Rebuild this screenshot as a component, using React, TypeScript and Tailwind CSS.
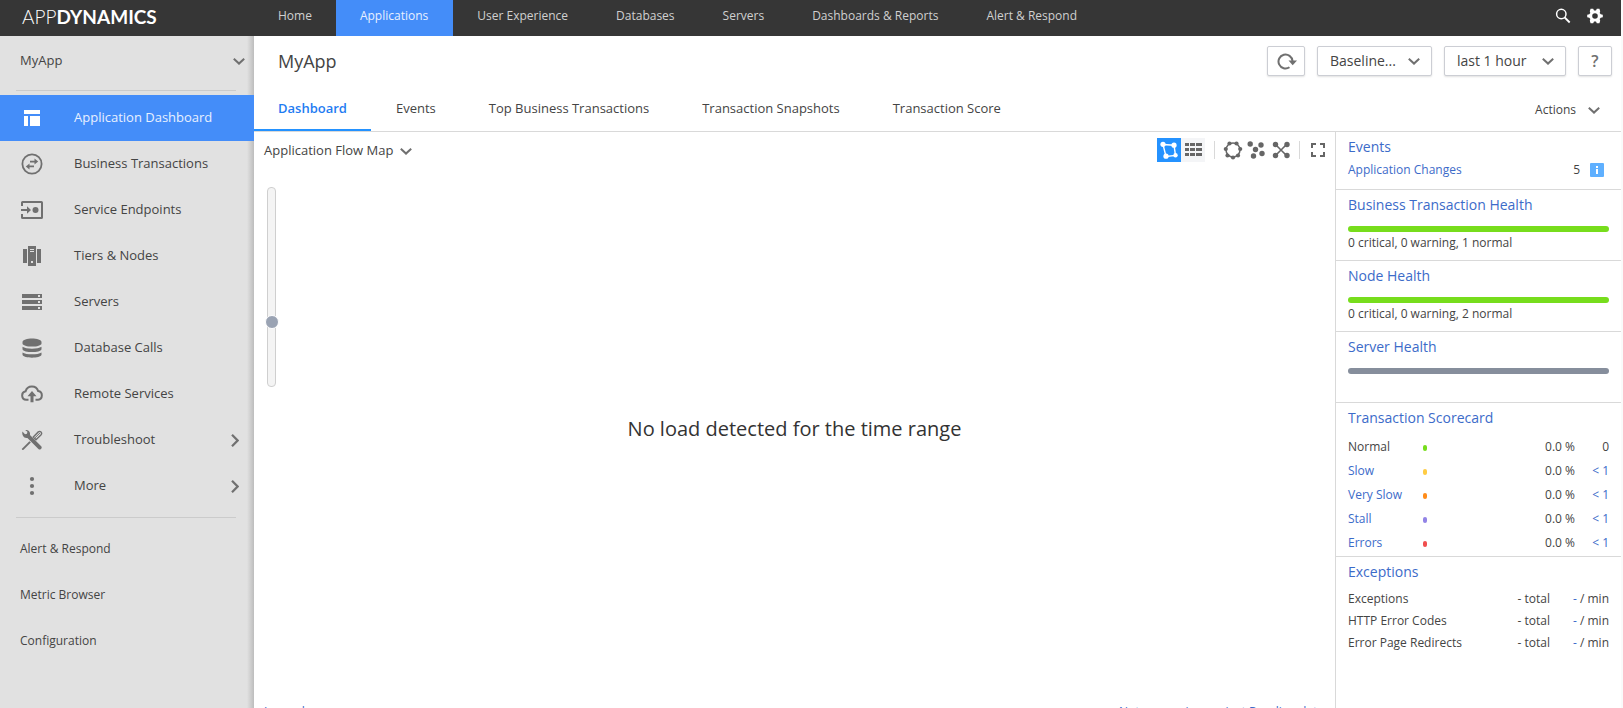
import React from "react";

type IconProps = { className?: string };

const Chevron = ({ className = "" }: IconProps) => (
  <svg viewBox="0 0 12 7" className={`h-[7px] w-3 shrink-0 ${className}`} fill="none" stroke="#707070" strokeWidth="2">
    <path d="M0.8 0.8 6 5.6 11.2 0.8" />
  </svg>
);

const ChevronRight = () => (
  <svg viewBox="0 0 8 13" className="h-[13px] w-2 shrink-0" fill="none" stroke="#707070" strokeWidth="2.2">
    <path d="M1 0.8 6.6 6.5 1 12.2" />
  </svg>
);

const Glyph = ({ children }: { children: React.ReactNode }) => (
  <svg viewBox="0 0 22 22" className="size-[22px] shrink-0" fill="currentColor">
    {children}
  </svg>
);

const DashboardIcon = () => (
  <Glyph>
    <path d="M3 3h16v4H3zM3 9h4v10H3zM9 9h10v10H9z" />
  </Glyph>
);

const TransactionsIcon = () => (
  <Glyph>
    <circle cx="11" cy="11" r="9.6" fill="none" stroke="currentColor" strokeWidth="1.8" />
    <path d="M9 7.8h4.5V5.6L17.2 8.6 13.5 11.6V9.4H9zM13 12.6H8.500V10.400L4.800 13.400 8.500 16.400V14.200H13z" />
  </Glyph>
);

const EndpointsIcon = () => (
  <Glyph>
    <path d="M1 7V3.600Q1 3 1.600 3H20.400Q21 3 21 3.600V18.400Q21 19 20.400 19H1.600Q1 19 1 18.400V15" fill="none" stroke="currentColor" strokeWidth="2" />
    <path d="M0 10h6V7.200L10 11 6 14.800V12H0z" />
    <circle cx="14.500" cy="11" r="3" />
  </Glyph>
);

const TiersIcon = () => (
  <Glyph>
    <path d="M2 4h4v14H2zM16 4h4v14h-4z" />
    <path fillRule="evenodd" d="M7 1h8v20H7zM9 4v1h4V4zM9 6v1h4V6zM10 16v2h2v-2z" />
  </Glyph>
);

const ServersIcon = () => (
  <Glyph>
    <path
      fillRule="evenodd"
      d="M1 3h20v4H1zM17 4v2h2V4zM1 9h20v4H1zM17 10v2h2v-2zM1 15h20v4H1zM17 16v2h2v-2z"
    />
  </Glyph>
);

const DatabaseIcon = () => (
  <Glyph>
    <path d="M1.500 5C1.500 0.200 20.500 0.200 20.500 5V6.500C20.500 10.600 1.500 10.600 1.500 6.500z" />
    <path d="M1.500 9.800C5 12.400 17 12.400 20.500 9.800V12.200C19.500 16 2.500 16 1.500 12.200z" />
    <path d="M1.500 15.400C5 18 17 18 20.500 15.400V17.800C19.500 21.600 2.500 21.600 1.500 17.800z" />
  </Glyph>
);

const CloudIcon = () => (
  <Glyph>
    <path
      d="M7.500 16.800H5.200A4.300 4.300 0 0 1 4.600 8.300 6.600 6.600 0 0 1 17.200 8.100 4.400 4.400 0 0 1 17 16.800H14.500"
      fill="none"
      stroke="currentColor"
      strokeWidth="2"
    />
    <path d="M9.500 19.200v-6H6.500L11 8l4.500 5.200h-3v6z" />
  </Glyph>
);

const ToolsIcon = () => (
  <Glyph>
    <path d="M1.400 2.600 4 5.200 6 4.700 6.400 2.800 4.200 1C7.200 0.400 9.600 2.700 9 6L20.200 17.200C21.800 19 19.200 21.600 17.400 20L6.400 8.900C3.200 9.700 0.600 6.600 1.400 2.600z" />
    <path d="M1.200 19.400 8.400 12.200 9.800 13.600 2.600 20.800 0.900 21.100z" />
    <path
      d="M12.300 7.900 17.300 2.900Q18.800 1.800 20 3 21.200 4.200 20.100 5.700L15 10.700z"
      fill="none"
      stroke="currentColor"
      strokeWidth="1.400"
    />
    <path d="M14 8.800 19 3.900" stroke="currentColor" strokeWidth="1" />
  </Glyph>
);

const MoreIcon = () => (
  <Glyph>
    <circle cx="11" cy="4" r="2.100" />
    <circle cx="11" cy="11" r="2.100" />
    <circle cx="11" cy="18" r="2.100" />
  </Glyph>
);

const navItems = ["Home", "Applications", "User Experience", "Databases", "Servers", "Dashboards & Reports", "Alert & Respond"];

const sideItems = [
  { label: "Application Dashboard", icon: <DashboardIcon />, active: true },
  { label: "Business Transactions", icon: <TransactionsIcon /> },
  { label: "Service Endpoints", icon: <EndpointsIcon /> },
  { label: "Tiers & Nodes", icon: <TiersIcon /> },
  { label: "Servers", icon: <ServersIcon /> },
  { label: "Database Calls", icon: <DatabaseIcon /> },
  { label: "Remote Services", icon: <CloudIcon /> },
  { label: "Troubleshoot", icon: <ToolsIcon />, nested: true },
  { label: "More", icon: <MoreIcon />, nested: true },
];

const tabs = ["Events", "Top Business Transactions", "Transaction Snapshots", "Transaction Score"];

const health = [
  { title: "Business Transaction Health", bar: "bg-[#77dd1c]", text: "0 critical, 0 warning, 1 normal" },
  { title: "Node Health", bar: "bg-[#77dd1c]", text: "0 critical, 0 warning, 2 normal" },
  { title: "Server Health", bar: "bg-[#868e9c]", text: "" },
];

const scorecard = [
  { label: "Normal", dot: "bg-[#77dd1c]", count: "0" },
  { label: "Slow", dot: "bg-[#ffcc44]", count: "< 1", link: true },
  { label: "Very Slow", dot: "bg-[#ff8c1a]", count: "< 1", link: true },
  { label: "Stall", dot: "bg-[#9283e6]", count: "< 1", link: true },
  { label: "Errors", dot: "bg-[#f04e4e]", count: "< 1", link: true },
];

const exceptions = ["Exceptions", "HTTP Error Codes", "Error Page Redirects"];

const boxed = "h-[30px] rounded-[2px] border border-[#ccced4] bg-white shadow-[0_1px_2px_rgba(0,0,0,0.12)]";

function TopBar() {
  return (
    <header className="flex h-9 shrink-0 items-stretch bg-[#363636]">
      <div className="flex w-[254px] shrink-0 items-center pb-[3px] pl-[22px] font-[Lato,sans-serif] text-[19px] leading-8 text-white">
        <span className="font-light">APP</span>
        <span className="font-bold">DYNAMICS</span>
      </div>
      <nav className="flex text-xs text-[#d0d0d0]">
        {navItems.map((item) => (
          <a
            key={item}
            href="#"
            className={`flex items-center whitespace-nowrap pb-[5px] pl-6 ${item === "Applications" ? "bg-[#448df9] pr-[25px] text-[#e8f0ff]" : "pr-6"}`}
          >
            {item}
          </a>
        ))}
      </nav>
      <div className="ml-auto flex items-center gap-4 pb-1 pr-[18px] text-white">
        <button aria-label="Search">
          <svg viewBox="0 0 16 16" className="size-4" fill="none" stroke="currentColor">
            <circle cx="6.300" cy="6" r="4.700" strokeWidth="1.500" />
            <path d="M9.700 9.500 14.700 14.500" strokeWidth="1.800" />
          </svg>
        </button>
        <button aria-label="Settings">
          <svg viewBox="0 0 16 16" className="size-4" fill="currentColor">
            <path
              fillRule="evenodd"
              d="M3.600 0.800H6.200L7 2.400H9L9.800 0.800H12.400L13.200 3.200 12.700 4.900 13.700 6.200 15.800 6.700V9.300L13.700 9.800 12.700 11.100 13.200 12.800 12.400 15.200H9.800L9 13.600H7L6.200 15.200H3.600L2.800 12.800 3.300 11.100 2.300 9.800 0.200 9.300V6.700L2.300 6.200 3.300 4.900 2.800 3.200zM8 5.200A2.800 2.800 0 1 0 8 10.800 2.800 2.800 0 1 0 8 5.200z"
            />
          </svg>
        </button>
      </div>
    </header>
  );
}

function Sidebar() {
  return (
    <aside className="w-[254px] shrink-0 bg-[#e1e1e1] bg-[linear-gradient(to_left,#bdbdbd,#e1e1e1_7px)] text-[13px] text-[#444]">
      <button className="flex h-[50px] w-full items-center justify-between pl-5 pr-[9px]">
        MyApp
        <Chevron />
      </button>
      <hr className="mb-1 ml-4 mr-[18px] mt-1 border-[#cbcbcb]" />
      <nav>
        {sideItems.map((item) => (
          <a
            key={item.label}
            href="#"
            className={`flex h-[46px] items-center gap-[31px] pl-[21px] pr-[15px] ${item.active ? "bg-[#448df9] text-white" : "text-[#707070]"}`}
          >
            {item.icon}
            <span className={`grow ${item.active ? "text-[#e8f0ff]" : "text-[#444]"}`}>{item.label}</span>
            {item.nested && <ChevronRight />}
          </a>
        ))}
      </nav>
      <hr className="mb-2 ml-4 mr-[18px] mt-2 border-[#cbcbcb]" />
      <nav className="text-xs">
        {["Alert & Respond", "Metric Browser", "Configuration"].map((item) => (
          <a key={item} href="#" className="flex h-[46px] items-center pl-5">
            {item}
          </a>
        ))}
      </nav>
    </aside>
  );
}

function Picker({ label, value, width }: { label: string; value: string; width: string }) {
  return (
    <div className={`relative ${width}`}>
      <select
        aria-label={label}
        className={`${boxed} w-full appearance-none pl-3 text-sm leading-5 text-[#444]`}
      >
        <option>{value}</option>
      </select>
      <Chevron className="pointer-events-none absolute right-3 top-3" />
    </div>
  );
}

function PageHead() {
  return (
    <>
      <div className="flex h-[50px] shrink-0 items-center justify-between pl-6 pr-[9px]">
        <h1 className="text-lg text-[#444]">MyApp</h1>
        <div className="flex gap-3">
          <button aria-label="Refresh" className={`${boxed} flex w-[38px] items-center justify-center pl-[2px]`}>
            <svg viewBox="0 0 20 18" className="h-[18px] w-5" fill="none">
              <path d="M12.500 15.300A7 7 0 1 1 15.500 9" stroke="#707070" strokeWidth="2" />
              <path d="M11.500 8.600H20L15.700 13.200z" fill="#707070" />
            </svg>
          </button>
          <Picker label="Baseline" value="Baseline..." width="w-[115px]" />
          <Picker label="Time range" value="last 1 hour" width="w-[122px]" />
          <button aria-label="Help" className={`${boxed} w-[34px] text-base leading-5 font-semibold text-[#707070]`}>
            ?
          </button>
        </div>
      </div>
      <div className="flex h-[46px] shrink-0 items-stretch border-b border-[#d9d9d9] text-[13px] text-[#444]">
        <a href="#" className="flex items-center border-b-2 border-[#2492ff] px-6 pt-[3px] font-semibold text-[#1f7cf2]">
          Dashboard
        </a>
        {tabs.map((tab) => (
          <a key={tab} href="#" className="flex items-center border-b-2 border-transparent pl-[25px] pr-7 pt-[3px]">
            {tab}
          </a>
        ))}
        <button className="ml-auto flex items-center gap-3 pr-[21px] pt-[3px] text-xs">
          Actions
          <Chevron />
        </button>
      </div>
    </>
  );
}

function MapTools() {
  return (
    <div className="flex items-center text-[#666]">
      <button aria-label="Flow map view" className="bg-[#2492ff] text-white">
        <svg viewBox="0 0 24 24" className="size-6" fill="currentColor">
          <path d="M6 6.500 17 7.200 18.500 17.500 9 18.500z" fill="none" stroke="currentColor" strokeWidth="1.400" />
          <circle cx="6" cy="6.300" r="2.600" />
          <circle cx="17" cy="7.200" r="2.600" />
          <circle cx="18.500" cy="17.300" r="2.200" />
          <circle cx="9" cy="18.200" r="2.600" />
        </svg>
      </button>
      <button aria-label="List view" className="bg-[#f4f5f7]">
        <svg viewBox="0 0 24 24" className="size-6" fill="currentColor">
          <path d="M4 5h4v3H4zM9 5h5v3H9zM15 5h6v3h-6zM4 10h4v3H4zM9 10h5v3H9zM15 10h6v3h-6zM4 15h4v3H4zM9 15h5v3H9zM15 15h6v3h-6z" />
        </svg>
      </button>
      <span className="ml-[9px] h-[18px] w-px bg-[#d9d9d9]" />
      <button aria-label="Circular layout" className="ml-2">
        <svg viewBox="0 0 20 20" className="size-5" fill="currentColor">
          <circle cx="10" cy="10" r="7" fill="none" stroke="currentColor" strokeWidth="1.500" />
          <circle cx="6.500" cy="3.500" r="2.100" />
          <circle cx="13.500" cy="3.500" r="2.100" />
          <circle cx="17.200" cy="9" r="2.100" />
          <circle cx="15" cy="15.500" r="2.100" />
          <circle cx="10" cy="17.500" r="2.100" />
          <circle cx="4.500" cy="15.500" r="2.100" />
          <circle cx="2.800" cy="9" r="2.100" />
        </svg>
      </button>
      <button aria-label="Scattered layout" className="ml-1">
        <svg viewBox="0 0 20 20" className="size-5" fill="currentColor">
          <circle cx="3.200" cy="4" r="2.700" />
          <circle cx="14" cy="5" r="2.700" />
          <circle cx="8.500" cy="9.500" r="2.700" />
          <circle cx="15" cy="13.500" r="2.700" />
          <circle cx="6.500" cy="16" r="2.700" />
        </svg>
      </button>
      <button aria-label="Star layout" className="ml-1">
        <svg viewBox="0 0 20 20" className="size-5" fill="currentColor">
          <path d="M4 4 16 16M16 4 4 16" stroke="currentColor" strokeWidth="1.600" />
          <circle cx="4.500" cy="4.500" r="2.700" />
          <circle cx="16" cy="4.500" r="2.700" />
          <circle cx="4.500" cy="15.500" r="2.700" />
          <circle cx="16" cy="15.500" r="2.700" />
        </svg>
      </button>
      <span className="ml-2 h-[18px] w-px bg-[#d9d9d9]" />
      <button aria-label="Full screen" className="ml-[11px]">
        <svg viewBox="0 0 14 14" className="size-[14px]" fill="none" stroke="currentColor" strokeWidth="2">
          <path d="M1 5V1H5M9 1h4V5M13 9v4H9M5 13H1V9" />
        </svg>
      </button>
    </div>
  );
}

function FlowMap() {
  return (
    <section className="flex min-w-0 grow flex-col pl-[10px] pr-[10px] pt-[6px]">
      <div className="flex h-6 shrink-0 items-center justify-between">
        <button className="flex items-center gap-[7px] pt-[2px] text-[13px] text-[#444]">
          Application Flow Map
          <Chevron />
        </button>
        <MapTools />
      </div>
      <div className="relative flex min-h-0 grow flex-col pt-[25px]">
        <input
          type="range"
          aria-label="Zoom"
          min={0}
          max={100}
          defaultValue={31}
          className="h-[200px] w-[14px] appearance-none bg-transparent [direction:rtl] [writing-mode:vertical-lr] [&::-webkit-slider-runnable-track]:h-full [&::-webkit-slider-runnable-track]:w-[9px] [&::-webkit-slider-runnable-track]:rounded-[4px] [&::-webkit-slider-runnable-track]:border [&::-webkit-slider-runnable-track]:border-[#cfcfcf] [&::-webkit-slider-runnable-track]:bg-[#f4f4f4] [&::-webkit-slider-thumb]:-ml-[3px] [&::-webkit-slider-thumb]:size-[14px] [&::-webkit-slider-thumb]:appearance-none [&::-webkit-slider-thumb]:rounded-full [&::-webkit-slider-thumb]:border [&::-webkit-slider-thumb]:border-white [&::-webkit-slider-thumb]:bg-[#9aa3b3]"
        />
        <p className="pointer-events-none absolute inset-0 flex items-center justify-center pb-2 text-xl text-[#333]">
          No load detected for the time range
        </p>
      </div>
      <div className="flex h-1 shrink-0 justify-between pr-px text-xs text-[#3c6bc9]">
        <a href="#">Legend</a>
        <a href="#">Not comparing against Baseline data</a>
      </div>
    </section>
  );
}

const PanelTitle = ({ children }: { children: React.ReactNode }) => (
  <h2 className="text-sm leading-5 text-[#3c6bc9]">{children}</h2>
);

function Summary() {
  return (
    <aside className="flex w-[286px] shrink-0 flex-col border-l border-[#d9d9d9] text-xs text-[#444]">
      <section className="h-[58px] shrink-0 border-b border-[#d9d9d9] px-3 pt-[5px]">
        <PanelTitle>Events</PanelTitle>
        <div className="flex h-[26px] items-center">
          <a href="#" className="grow text-[#3c6bc9]">
            Application Changes
          </a>
          <span>5</span>
          <span className="ml-[10px] mr-[5px] flex size-[14px] items-center justify-center rounded-[1px] bg-[#5fb0ff]">
            <svg viewBox="0 0 14 14" className="size-[14px]" fill="#fff">
              <path d="M6 3h2v2H6zM6 6h2v5H6z" />
            </svg>
          </span>
        </div>
      </section>
      {health.map((h) => (
        <section key={h.title} className="h-[71px] shrink-0 border-b border-[#d9d9d9] px-3 pt-[5px]">
          <PanelTitle>{h.title}</PanelTitle>
          <div className={`mt-[11px] h-[6px] rounded-[3px] ${h.bar}`} />
          <p className="mt-[3px]">{h.text}</p>
        </section>
      ))}
      <section className="shrink-0 border-b border-[#d9d9d9] px-3 pb-px pt-[5px]">
        <PanelTitle>Transaction Scorecard</PanelTitle>
        <table className="mt-[7px] w-full">
          <tbody>
            {scorecard.map((row) => (
              <tr key={row.label} className="h-6">
                <td className={`w-[75px] p-0 ${row.link ? "text-[#3c6bc9]" : ""}`}>{row.label}</td>
                <td className="p-0 pt-[2px]">
                  <span className={`block h-[6px] w-1 rounded-[2px] ${row.dot}`} />
                </td>
                <td className="p-0 text-right">0.0 %</td>
                <td className={`w-[34px] p-0 text-right ${row.link ? "text-[#3c6bc9]" : ""}`}>{row.count}</td>
              </tr>
            ))}
          </tbody>
        </table>
      </section>
      <section className="px-3 pt-[5px]">
        <PanelTitle>Exceptions</PanelTitle>
        <table className="mt-[6px] w-full">
          <tbody>
            {exceptions.map((label) => (
              <tr key={label} className="h-[22px]">
                <td className="p-0">{label}</td>
                <td className="p-0 text-right">- total</td>
                <td className="w-[59px] p-0 text-right">
                  <span className="text-[#3c6bc9]">-</span> / min
                </td>
              </tr>
            ))}
          </tbody>
        </table>
      </section>
    </aside>
  );
}

export default function App() {
  return (
    <div className="h-screen overflow-hidden bg-[#fafafa] pr-[2px] font-['Open_Sans',sans-serif]">
      <div className="flex h-full flex-col bg-white">
        <TopBar />
        <div className="flex min-h-0 grow">
          <Sidebar />
          <main className="flex min-w-0 grow flex-col">
            <PageHead />
            <div className="flex min-h-0 grow">
              <FlowMap />
              <Summary />
            </div>
          </main>
        </div>
      </div>
    </div>
  );
}
